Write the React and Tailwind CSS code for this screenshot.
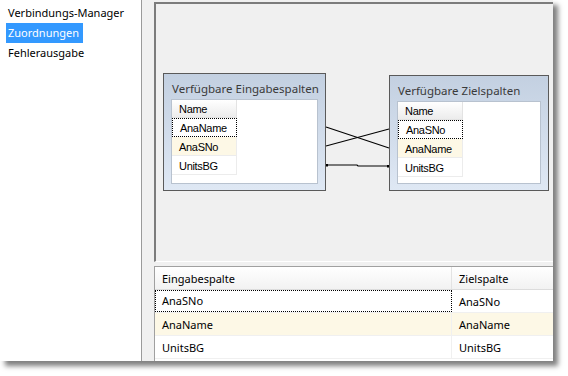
import React from "react";

const listFont = { fontFamily: '"Liberation Sans", Arial, sans-serif' };

function ColumnBox({ title, rows, focusIndex, yellowIndex, className }) {
  return (
    <div
      className={
        "absolute border border-[#5a5a5a] bg-gradient-to-b from-[#c3d0e1] to-[#dfe8f4] flex flex-col " +
        className
      }
    >
      <div className="h-[25px] pl-[8px] pt-[4px] flex items-center text-[11.5px] text-[#3a3a3a] leading-none">
        {title}
      </div>
      <div className="mx-[7px] flex-1 bg-white border border-[#b8c2cf] mb-[6px]">
        <div className="w-[65px] flex flex-col text-[11px] text-black tracking-[-0.3px]" style={listFont}>
          <div className="h-[18px] pl-[7px] pt-[2px] flex items-center bg-gradient-to-b from-white to-[#ececec] border-b border-r border-[#e3e3e3]">
            Name
          </div>
          {rows.map((r, i) => (
            <div
              key={r}
              className={
                "h-[19px] pl-[7px] pt-[2px] flex items-center border-r border-b " +
                (i === focusIndex
                  ? "border border-dotted border-black "
                  : "border-[#ececec] ") +
                (i === yellowIndex ? "bg-[#fdf8e6]" : "bg-white")
              }
            >
              {r}
            </div>
          ))}
        </div>
      </div>
    </div>
  );
}

export default function App() {
  const font = { fontFamily: '"Noto Sans", "Open Sans", sans-serif' };
  return (
    <div className="w-[568px] h-[376px] bg-white overflow-hidden" style={font}>
      <div className="w-[553px] h-[361px] flex shadow-[5px_5px_5px_rgba(0,0,0,0.5)]">
        {/* Left navigation */}
        <div className="w-[142px] h-full bg-white border-r border-[#9a9a9a] pt-[3px] pl-[6px] flex flex-col text-[11px] text-black">
          <div className="h-[20px] flex items-center pl-[2px]">Verbindungs-Manager</div>
          <div className="h-[20px] flex items-center">
            <span className="h-[20px] w-[77px] pl-[2px] flex items-center bg-[#3399ff] text-white">
              Zuordnungen
            </span>
          </div>
          <div className="h-[20px] flex items-center pl-[2px]">Fehlerausgabe</div>
        </div>

        {/* Right content */}
        <div className="flex-1 h-full bg-[#f0f0f0] pl-[12px] pt-[2px] flex flex-col">
          {/* Diagram */}
          <div className="relative h-[260px] border-t-2 border-l-2 border-[#7c7c7c] border-b border-b-white">
            <ColumnBox
              title="Verfügbare Eingabespalten"
              rows={["AnaName", "AnaSNo", "UnitsBG"]}
              focusIndex={0}
              yellowIndex={1}
              className="left-[7px] top-[69px] w-[163px] h-[118px]"
            />
            <ColumnBox
              title="Verfügbare Zielspalten"
              rows={["AnaSNo", "AnaName", "UnitsBG"]}
              focusIndex={0}
              yellowIndex={1}
              className="left-[233px] top-[71px] w-[160px] h-[116px]"
            />
            <svg className="absolute left-0 top-0" width="400" height="258">
              <line x1="170" y1="123" x2="233" y2="144" stroke="#000" strokeWidth="1.1" />
              <line x1="170" y1="142" x2="233" y2="125" stroke="#000" strokeWidth="1.1" />
              <polyline
                points="170,161 201,161 202,162 233,162"
                fill="none"
                stroke="#000"
                strokeWidth="1.2"
              />
              <rect x="170" y="160" width="2" height="2.5" fill="#000" />
              <rect x="231" y="161" width="2" height="2.5" fill="#000" />
            </svg>
          </div>

          {/* Grid */}
          <div className="mt-[4px] flex-1 bg-white border-t border-l border-[#a0a0a0] flex flex-col text-[11px] text-black">
            <div className="h-[23px] flex bg-gradient-to-b from-white to-[#f2f2f2] border-b border-[#dcdcdc]">
              <div className="w-[297px] pl-[7px] pt-[2px] flex items-center border-r border-[#e3e3e3]">Eingabespalte</div>
              <div className="flex-1 pl-[7px] pt-[2px] flex items-center">Zielspalte</div>
            </div>
            <div className="h-[23px] flex border-b border-[#f0f0f0]">
              <div className="w-[297px] pl-[6px] pt-[1px] flex items-center border border-dotted border-black">AnaSNo</div>
              <div className="flex-1 pl-[7px] pt-[2px] flex items-center">AnaSNo</div>
            </div>
            <div className="h-[23px] flex bg-[#fdf8e6] border-b border-[#f0f0f0]">
              <div className="w-[297px] pl-[7px] pt-[2px] flex items-center border-r border-[#f0f0f0]">AnaName</div>
              <div className="flex-1 pl-[7px] pt-[2px] flex items-center">AnaName</div>
            </div>
            <div className="h-[23px] flex border-b border-[#f0f0f0]">
              <div className="w-[297px] pl-[7px] pt-[2px] flex items-center border-r border-[#f0f0f0]">UnitsBG</div>
              <div className="flex-1 pl-[7px] pt-[2px] flex items-center">UnitsBG</div>
            </div>
          </div>
        </div>
      </div>
    </div>
  );
}
